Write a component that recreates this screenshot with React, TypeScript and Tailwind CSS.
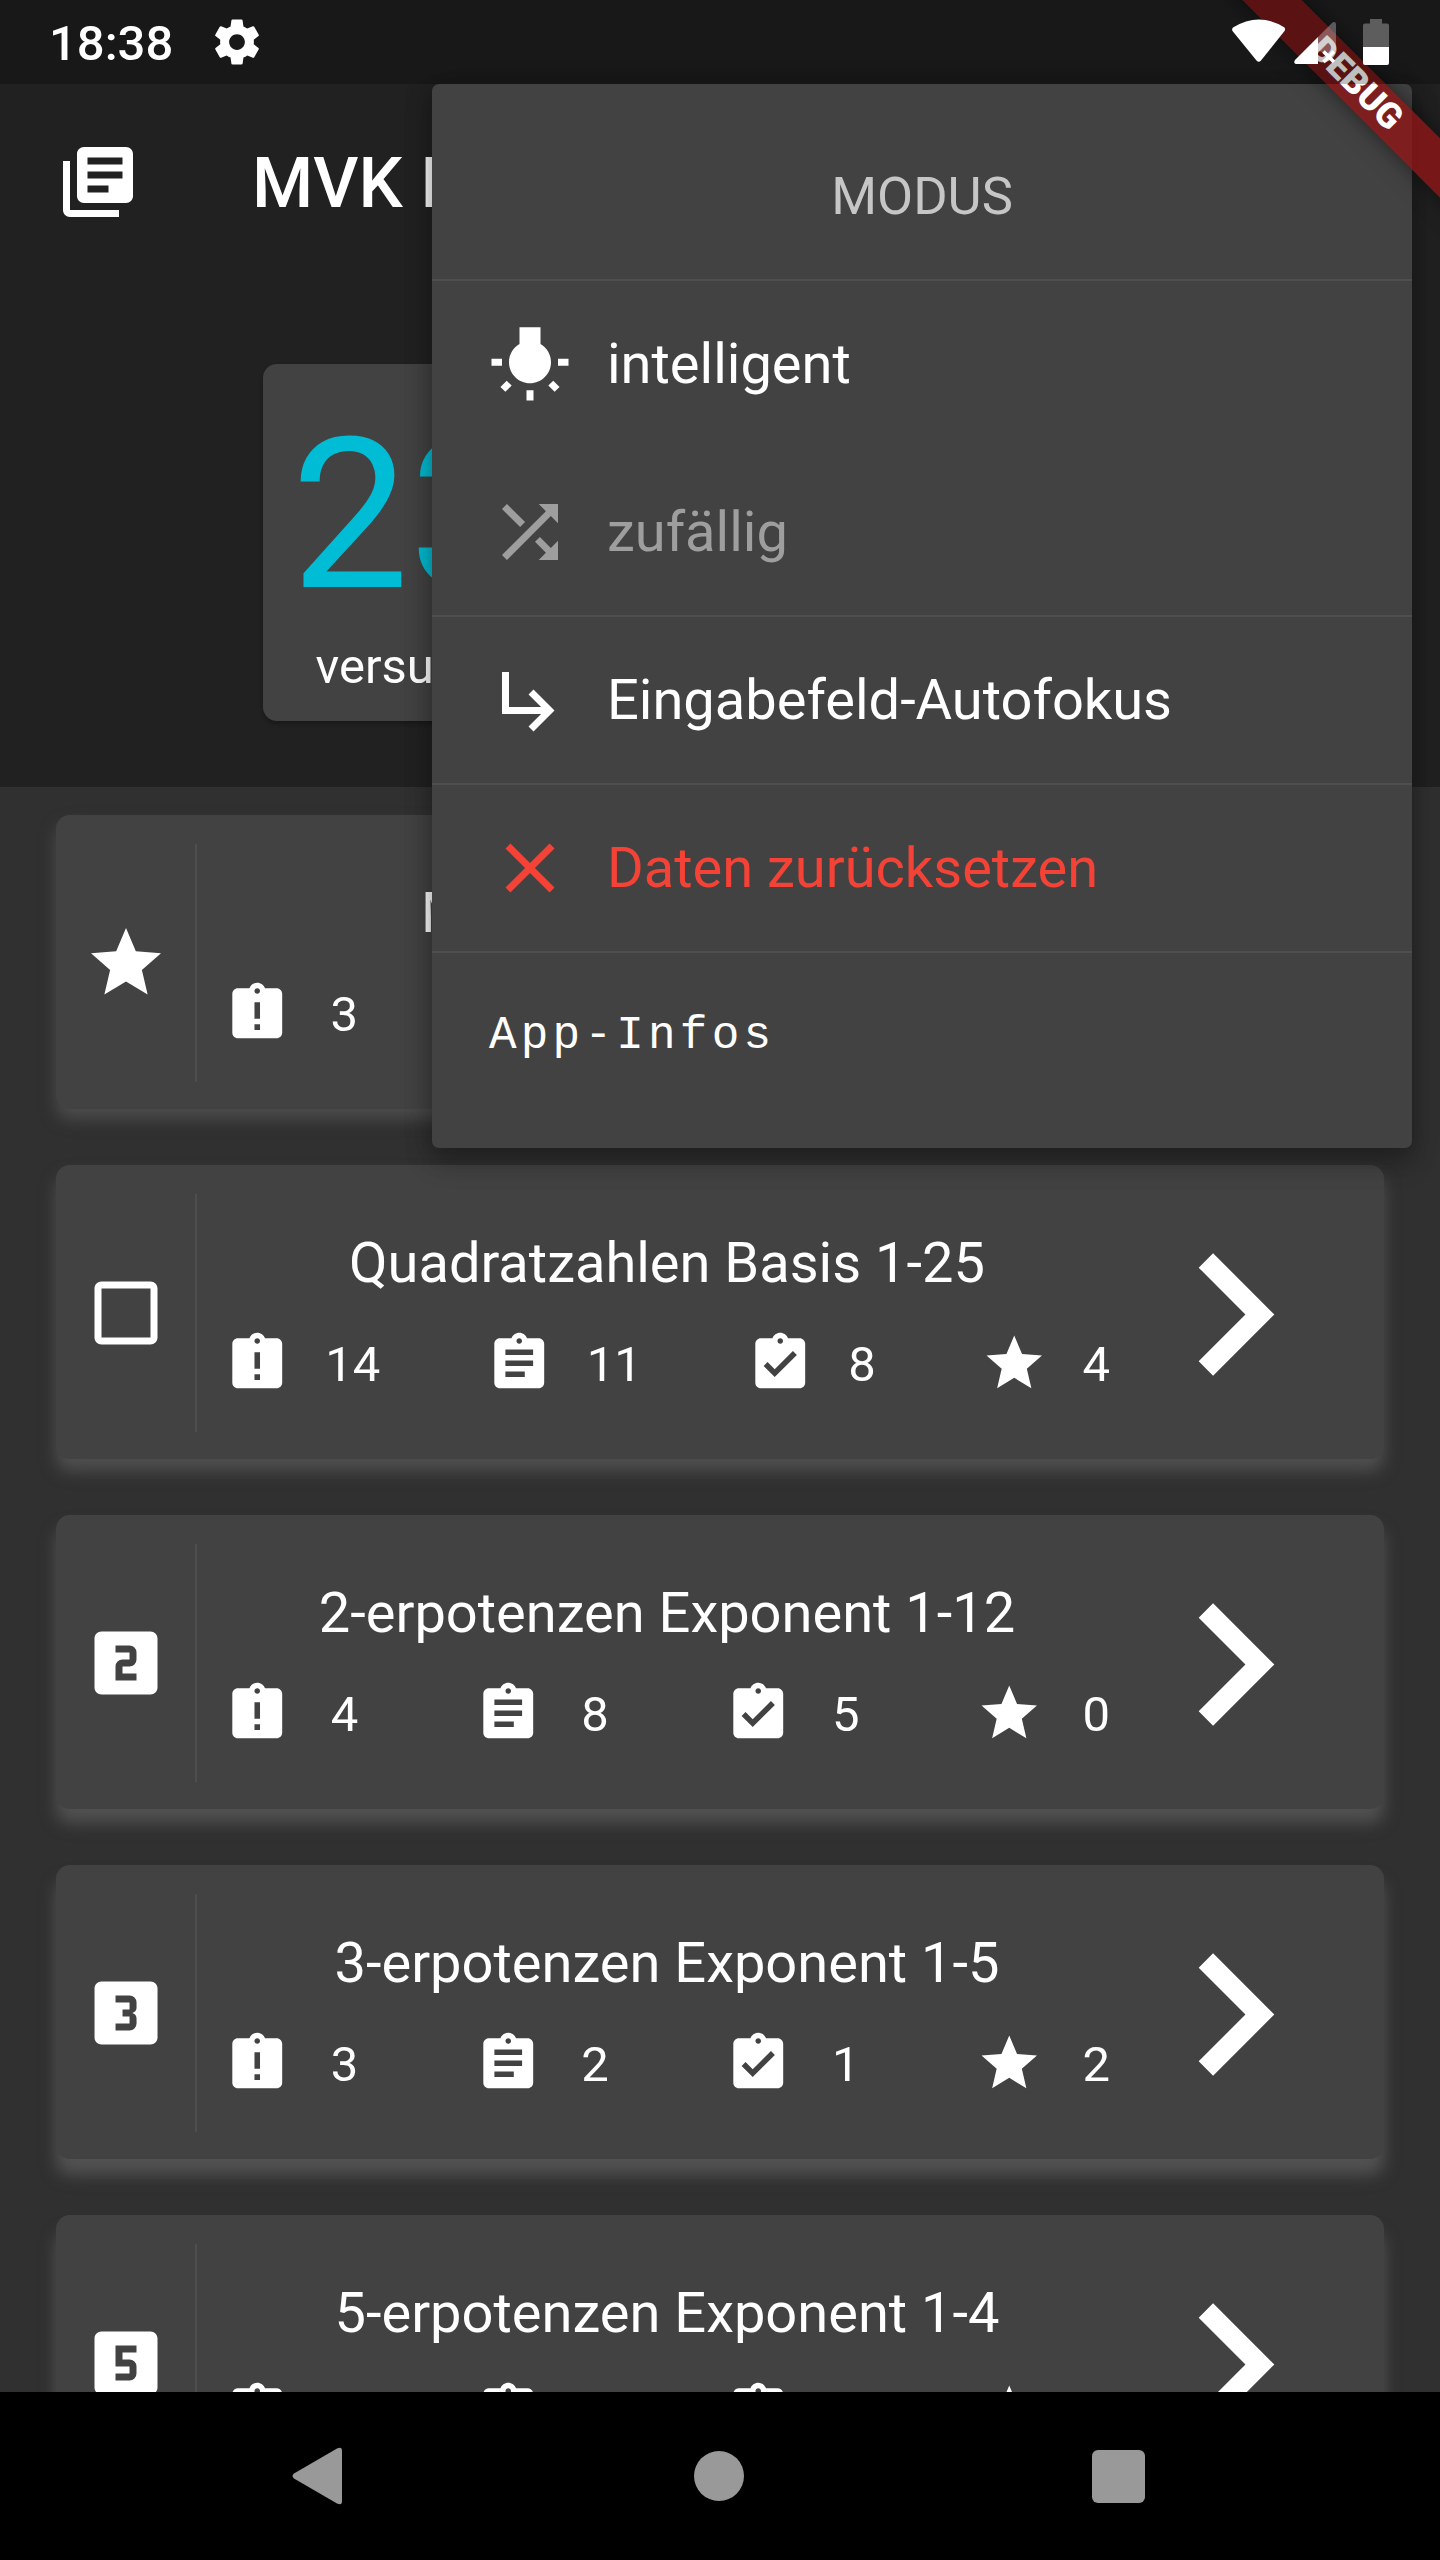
import React from "react";
import {
  MdAssignment,
  MdAssignmentLate,
  MdAssignmentTurnedIn,
  MdCheckBoxOutlineBlank,
  MdClose,
  MdKeyboardArrowRight,
  MdLooks3,
  MdLooks5,
  MdLooksTwo,
} from "react-icons/md";

type IconProps = { className?: string };

function glyph(d: string) {
  return function Glyph({ className }: IconProps) {
    return (
      <svg viewBox="0 0 24 24" fill="currentColor" className={className}>
        <path d={d} />
      </svg>
    );
  };
}

const Gear = glyph(
  "M19.43 12.98c.04-.32.07-.64.07-.98s-.03-.66-.07-.98l2.11-1.65c.19-.15.24-.42.12-.64l-2-3.46c-.12-.22-.39-.3-.61-.22l-2.49 1c-.52-.4-1.08-.73-1.69-.98l-.38-2.65C14.46 2.18 14.25 2 14 2h-4c-.25 0-.46.18-.49.42l-.38 2.65c-.61.25-1.17.59-1.69.98l-2.49-1c-.23-.09-.49 0-.61.22l-2 3.46c-.13.22-.07.49.12.64l2.11 1.65c-.04.32-.07.65-.07.98s.03.66.07.98l-2.11 1.65c-.19.15-.24.42-.12.64l2 3.46c.12.22.39.3.61.22l2.49-1c.52.4 1.08.73 1.69.98l.38 2.65c.03.24.24.42.49.42h4c.25 0 .46-.18.49-.42l.38-2.65c.61-.25 1.17-.59 1.69-.98l2.49 1c.23.09.49 0 .61-.22l2-3.46c.12-.22.07-.49-.12-.64l-2.11-1.65zM12 15.5c-1.93 0-3.5-1.57-3.5-3.5s1.57-3.5 3.5-3.5 3.5 1.57 3.5 3.5-1.57 3.5-3.5 3.5z",
);
const Library = glyph(
  "M4 6H2v14c0 1.1.9 2 2 2h14v-2H4V6zm16-4H8c-1.1 0-2 .9-2 2v12c0 1.1.9 2 2 2h12c1.1 0 2-.9 2-2V4c0-1.1-.9-2-2-2zm-1 9H9V9h10v2zm-4 4H9v-2h6v2zm4-8H9V5h10v2z",
);
const Bulb = glyph(
  "M3.55 18.54l1.41 1.41 1.8-1.79-1.41-1.41-1.8 1.79zM11 22.45h2V19.5h-2v2.95zM4 10.5H1v2h3v-2zm11-4.19V1.5H9v4.81C7.21 7.35 6 9.28 6 11.5c0 3.31 2.69 6 6 6s6-2.69 6-6c0-2.22-1.21-4.15-3-5.19zm5 4.19v2h3v-2h-3zm-2.76 7.66l1.79 1.8 1.41-1.41-1.8-1.79-1.4 1.4z",
);
const Shuffle = glyph(
  "M10.59 9.17L5.41 4 4 5.41l5.17 5.17 1.42-1.41zM14.5 4l2.04 2.04L4 18.59 5.41 20 17.96 7.46 20 9.5V4h-5.5zm.33 9.41l-1.41 1.41 3.13 3.13L14.5 20H20v-5.5l-2.04 2.04-3.13-3.13z",
);
const SubArrow = glyph("M19 15l-6 6-1.42-1.42L15.17 16H4V4h2v10h9.17l-3.59-3.58L13 9l6 6z");
const Star = glyph(
  "M12 17.27L18.18 21l-1.64-7.03L22 9.24l-7.19-.61L12 2 9.19 8.63 2 9.24l5.46 4.73L5.82 21z",
);

type Deck = {
  icon: React.ComponentType<IconProps>;
  title: string;
  titleClass?: string;
  shadow: string;
  stats: string[];
};

const decks: Deck[] = [
  {
    icon: Star,
    title: "M",
    titleClass: "pl-[197px]",
    shadow: "shadow-[0_10px_16px_0_#4c4c4c]",
    stats: ["3"],
  },
  {
    icon: MdCheckBoxOutlineBlank,
    title: "Quadratzahlen Basis 1-25",
    shadow: "shadow-[0_12px_16px_0_#4f4f4f]",
    stats: ["14", "11", "8", "4"],
  },
  {
    icon: MdLooksTwo,
    title: "2-erpotenzen Exponent 1-12",
    shadow: "shadow-[0_14px_16px_0_#515151]",
    stats: ["4", "8", "5", "0"],
  },
  {
    icon: MdLooks3,
    title: "3-erpotenzen Exponent 1-5",
    shadow: "shadow-[0_16px_16px_0_#525252]",
    stats: ["3", "2", "1", "2"],
  },
  {
    icon: MdLooks5,
    title: "5-erpotenzen Exponent 1-4",
    shadow: "shadow-[0_18px_16px_0_#525252]",
    stats: ["3", "2", "1", "2"],
  },
];

const statIcons = [MdAssignmentLate, MdAssignment, MdAssignmentTurnedIn, Star];

function StatRow({ stats }: { stats: string[] }) {
  const partial = stats.length < 4;
  return (
    <div className="flex h-[66px] items-center text-[49px] leading-[57px]">
      {stats.map((value, i) => {
        const Icon = statIcons[i];
        return (
          <React.Fragment key={i}>
            <Icon className="size-[66.5px] shrink-0" />
            {partial ? <span className="w-10 shrink-0" /> : <span className="grow basis-0" />}
            <span className="pt-0.5">{value}</span>
            {i < stats.length - 1 && <span className="grow-[2] basis-9" />}
          </React.Fragment>
        );
      })}
    </div>
  );
}

function DeckCard({ deck }: { deck: Deck }) {
  const Icon = deck.icon;
  return (
    <div className={`flex h-[294px] shrink-0 items-center rounded-[14px] bg-[#424242] pt-0.5 pr-7 ${deck.shadow}`}>
      <div className="flex w-[139px] justify-center">
        <Icon className="size-[84px]" />
      </div>
      <div className="h-[238px] w-0.5 bg-[#4e4e4e]" />
      <div className="ml-[27px] flex flex-1 flex-col gap-[35px]">
        <div className={`h-[66px] whitespace-nowrap text-[56px] leading-[66px] ${deck.titleClass ?? "text-center"}`}>
          {deck.title}
        </div>
        <StatRow stats={deck.stats} />
      </div>
      <MdKeyboardArrowRight className="mt-0.5 ml-px size-[245px] shrink-0" />
    </div>
  );
}

function MenuDivider() {
  return <div className="relative -my-px h-0.5 bg-[#4e4e4e]" />;
}

function MenuItem({ icon: Icon, label, className }: { icon: React.ComponentType<IconProps>; label: string; className?: string }) {
  return (
    <div className={`flex h-[168px] items-center gap-[35px] px-14 text-[56px] ${className ?? ""}`}>
      <Icon className="size-[84px]" />
      <span>{label}</span>
    </div>
  );
}

function PopupMenu() {
  return (
    <div className="absolute top-[84px] left-[432px] w-[980px] rounded-[7px] bg-[#424242] py-7 shadow-[0_14px_28px_0_rgba(0,0,0,0.22),0_4px_24px_4px_rgba(0,0,0,0.2)]">
      <div className="flex h-[168px] items-center justify-center text-[52.5px] text-[#c6c6c6]">MODUS</div>
      <MenuDivider />
      <MenuItem icon={Bulb} label="intelligent" />
      <MenuItem icon={Shuffle} label="zufällig" className="text-[#9e9e9e]" />
      <MenuDivider />
      <MenuItem icon={SubArrow} label="Eingabefeld-Autofokus" />
      <MenuDivider />
      <MenuItem icon={MdClose} label="Daten zurücksetzen" className="text-[#f44336]" />
      <MenuDivider />
      <div className="flex h-[168px] items-center px-[57px] pt-px font-['Liberation_Mono',monospace] text-[46px] tracking-[4.2px]">
        App-Infos
      </div>
    </div>
  );
}

function DebugBanner() {
  return (
    <div className="absolute top-0 right-0 size-[320px] overflow-hidden">
      <div className="absolute top-[63px] left-[36px] flex h-[42px] w-[400px] rotate-45 items-center justify-center bg-[#8d1616]/81 text-[35.7px] font-black shadow-[0_0_21px_rgba(0,0,0,0.5)]">
        DEBUG
      </div>
    </div>
  );
}

function StatusBar() {
  return (
    <div className="absolute inset-x-0 top-0 flex h-[84px] items-center bg-black/25 pl-[49px]">
      <span className="w-[161px] pt-[3px] text-[49px] font-medium">18:38</span>
      <Gear className="size-[54px]" />
      <svg viewBox="0 0 180 84" className="ml-auto h-[84px] w-[180px]" fill="#fff">
        <path d="M13 27.5Q39 11.500 64.500 27.500Q65.500 29 64.500 31L41 60.500Q38.700 63 36.500 60.500L12.500 31Q11.500 29 13 27.500Z" />
        <path d="M98 37V64H76Q73 63 75 60Z" />
        <path d="M98 37L112.500 22.500Q116 21 116 25V50L108 56L98 50Z" fillOpacity=".3" />
        <path d="M103.500 51.500l10.500 10.500M114 51.500l-10.500 10.500" stroke="#fff" strokeWidth="3.600" />
        <path d="M150 19h12v4.500h5q2 0 2 2V47h-26V25.500q0-2 2-2h5z" fillOpacity=".3" />
        <path d="M143 47h26v16q0 2-2 2h-22q-2 0-2-2z" />
      </svg>
      <span className="w-10" />
    </div>
  );
}

function NavBar() {
  return (
    <div className="relative flex h-[168px] shrink-0 items-center bg-black pl-[291px] text-[#999]">
      <svg viewBox="0 0 54 60" className="h-[60px] w-[54px]" fill="currentColor">
        <path d="M46 2.500Q51 0 51 5V55Q51 60 46 57.500L3 32.500Q0 30 3 27.500Z" />
      </svg>
      <span className="ml-[349px] size-[50px] rounded-full bg-[#999]" />
      <span className="ml-[348px] size-[53px] rounded-[6px] bg-[#999]" />
    </div>
  );
}

export default function App() {
  return (
    <div className="relative flex h-[2560px] w-[1440px] flex-col overflow-hidden bg-[#303030] font-[Roboto,sans-serif] text-white">
      <header className="h-[787px] shrink-0 bg-[#212121] pt-[84px]">
        <div className="flex h-[196px] items-center pl-14">
          <Library className="size-[84px]" />
          <span className="ml-[112px] pt-[3px] text-[70px] font-medium">MVK I</span>
        </div>
        <div className="mt-[84px] ml-[263px] flex h-[357px] w-[292px] flex-col items-center rounded-[14px] bg-[#424242] pt-7 shadow-[0_3px_4px_rgba(0,0,0,0.25)]">
          <span className="h-[246px] text-[210px] leading-[246px] text-[#00bcd4]">23</span>
          <span className="h-[57px] text-[49px] leading-[57px]">versucht</span>
        </div>
      </header>
      <main className="flex min-h-0 flex-1 flex-col gap-14 overflow-hidden px-14 pt-7">
        {decks.map((deck, i) => (
          <DeckCard key={i} deck={deck} />
        ))}
      </main>
      <NavBar />
      <PopupMenu />
      <DebugBanner />
      <StatusBar />
    </div>
  );
}
